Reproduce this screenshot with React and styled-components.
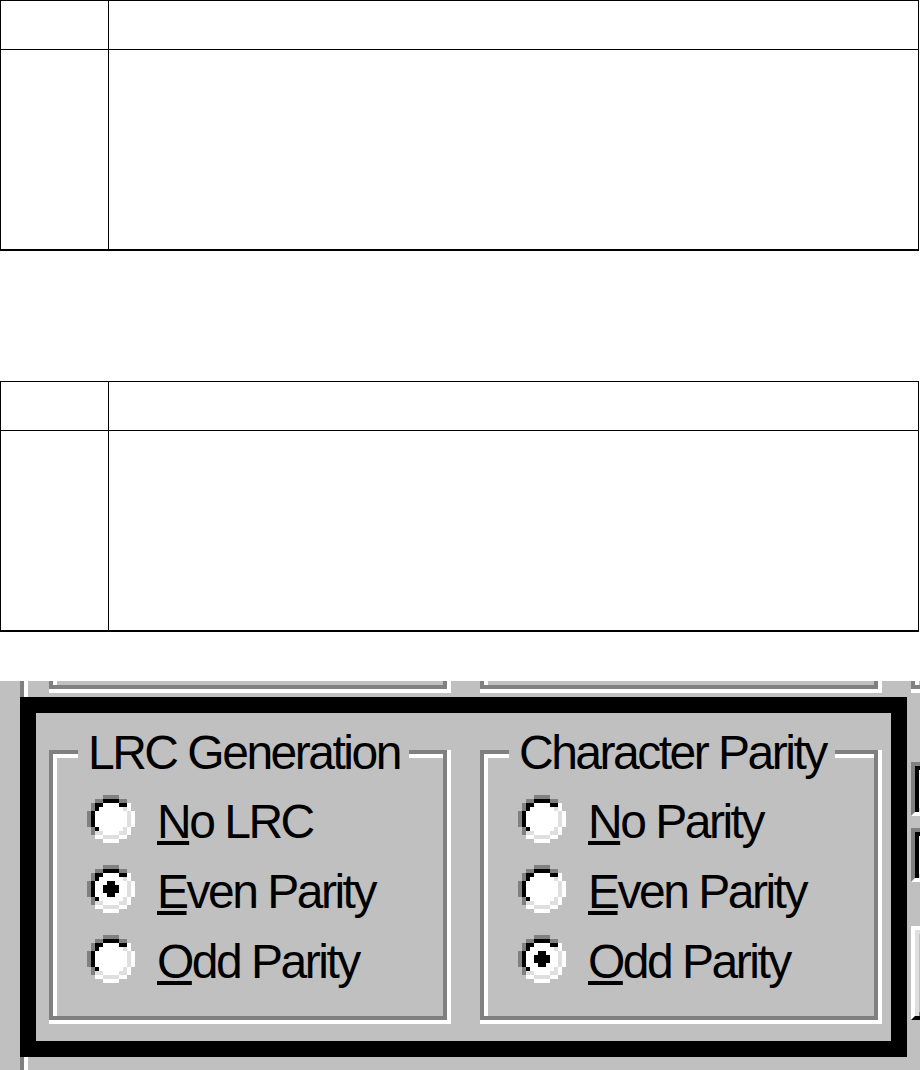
import React from 'react';
import styled, { createGlobalStyle } from 'styled-components';

const GlobalStyle = createGlobalStyle`
  * { box-sizing: border-box; }
  body {
    margin: 0;
    background: #fff;
    font-family: "Liberation Sans", Arial, sans-serif;
  }
`;

const Page = styled.div`
  width: 920px;
  display: flex;
  flex-direction: column;
`;

// empty two-column tables at the top
const Table = styled.div`
  width: 919px;
  margin-top: ${props => props.$offset}px;
  display: grid;
  grid-template-columns: 108px 1fr;
  grid-template-rows: 49px 199px;
  border: 1px solid #000;
  border-bottom-width: 2px;
`;

const Cell = styled.div`
  border-right: ${props => (props.$first ? '1px solid #000' : 'none')};
  border-bottom: ${props => (props.$head ? '1px solid #000' : 'none')};
`;

// enlarged win95 dialog crop
const Dialog = styled.div`
  margin-top: 49px;
  height: 389px;
  display: flex;
  padding-left: 20px;
  overflow: hidden;
  background: #c0c0c0;
  color: #000;
  font-family: "Liberation Sans", Arial, sans-serif;
  font-size: 48px;
  letter-spacing: -2.5px;
`;

const MainColumn = styled.div`
  width: 887px;
  flex-shrink: 0;
  padding-left: 4px;
  border-left: 4px solid #808080;
  box-shadow: inset 4px 0 0 #fff;
`;

const SideColumn = styled.div`
  width: 120px;
  flex-shrink: 0;
  margin-left: 4px;
  display: flex;
  flex-direction: column;
`;

const CutRow = styled.div`
  height: 12px;
  overflow: hidden;
  display: flex;
  align-items: flex-end;
  gap: 33px;
  padding: 0 0 4px ${props => props.$inset}px;
`;

const Highlight = styled.div`
  width: 887px;
  margin: 4px 0 0 -8px;
  display: flex;
  gap: 33px;
  padding: 37px 13px 21px 13px;
  border: 16px solid #000;
`;

const GroupBox = styled.div`
  position: relative;
  width: 398px;
  height: ${props => props.$height}px;
  flex-shrink: 0;
  padding: 41px 0 0 34px;
  border: 4px solid #808080;
  box-shadow: inset 4px 4px 0 #fff, 4px 0 0 #fff, 0 4px 0 #fff, 4px 4px 0 #fff;
`;

const GroupTitle = styled.span`
  position: absolute;
  top: -25px;
  left: 25px;
  height: 48px;
  padding: 0 9px 0 10px;
  line-height: 48px;
  white-space: nowrap;
  background: #c0c0c0;
`;

const OptionList = styled.div`
  display: flex;
  flex-direction: column;
  gap: 19px;
`;

const OptionRow = styled.div`
  display: flex;
  align-items: flex-start;
  gap: 22px;
`;

const OptionText = styled.span`
  padding-top: 3px;
  line-height: 48px;
  white-space: nowrap;
`;

const Mnemonic = styled.span`
  text-decoration: underline;
  text-decoration-thickness: 4px;
  text-underline-offset: 3px;
`;

const SunkenField = styled.div`
  height: 54px;
  margin-top: ${props => props.$top}px;
  background: #fff;
  border: 4px solid;
  border-color: #808080 #fff #fff #808080;
  box-shadow: inset 4px 4px 0 #000, inset -4px -4px 0 #dfdfdf;
`;

const RaisedButton = styled.div`
  height: 94px;
  margin-top: ${props => props.$top}px;
  background: #c0c0c0;
  border: 4px solid;
  border-color: #fff #000 #000 #fff;
  box-shadow: inset 4px 4px 0 #dfdfdf, inset -4px -4px 0 #808080;
`;

const PALETTE = { g: '#808080', k: '#000', w: '#fff', l: '#dfdfdf' };

const RADIO_RING = [
  '....gggg....',
  '..ggkkkkgg..',
  '.gkkwwwwkkw.',
  '.gkwwwwwwlw.',
  'gkwwwwwwwwlw',
  'gkwwwwwwwwlw',
  'gkwwwwwwwwlw',
  'gkwwwwwwwwlw',
  '.gkwwwwwwlw.',
  '.gllwwwwllw.',
  '..wwllllww..',
  '....wwww....',
];

const RADIO_DOT = ['.kk.', 'kkkk', 'kkkk', '.kk.'];

const pixels = (rows, dx = 0, dy = 0) =>
  rows.flatMap((row, y) =>
    row.split('').map((c, x) =>
      c === '.' ? null : (
        <rect key={`${dx}-${x}-${y}`} x={x + dx} y={y + dy} width="1" height="1" fill={PALETTE[c]} />
      )
    )
  );

const RadioIcon = ({ checked }) => (
  <svg width="48" height="48" viewBox="0 0 12 12" shapeRendering="crispEdges" style={{ flexShrink: 0 }}>
    {pixels(RADIO_RING)}
    {checked && pixels(RADIO_DOT, 4, 4)}
  </svg>
);

const Option = ({ label, checked }) => (
  <OptionRow>
    <RadioIcon checked={checked} />
    <OptionText>
      <Mnemonic>{label[0]}</Mnemonic>
      {label.slice(1)}
    </OptionText>
  </OptionRow>
);

const Group = ({ title, options, selected }) => (
  <GroupBox $height={270}>
    <GroupTitle>{title}</GroupTitle>
    <OptionList>
      {options.map(option => (
        <Option key={option} label={option} checked={option === selected} />
      ))}
    </OptionList>
  </GroupBox>
);

const EmptyTable = ({ offset }) => (
  <Table $offset={offset}>
    <Cell $first $head />
    <Cell $head />
    <Cell $first />
    <Cell />
  </Table>
);

export default function App() {
  return (
    <Page>
      <GlobalStyle />
      <EmptyTable offset={0} />
      <EmptyTable offset={130} />
      <Dialog>
        <MainColumn>
          <CutRow $inset={21}>
            <GroupBox $height={200} />
            <GroupBox $height={200} />
          </CutRow>
          <Highlight>
            <Group
              title="LRC Generation"
              options={['No LRC', 'Even Parity', 'Odd Parity']}
              selected="Even Parity"
            />
            <Group
              title="Character Parity"
              options={['No Parity', 'Even Parity', 'Odd Parity']}
              selected="Odd Parity"
            />
          </Highlight>
        </MainColumn>
        <SideColumn>
          <CutRow $inset={0}>
            <GroupBox $height={200} />
          </CutRow>
          <SunkenField $top={69} />
          <SunkenField $top={12} />
          <RaisedButton $top={44} />
        </SideColumn>
      </Dialog>
    </Page>
  );
}
